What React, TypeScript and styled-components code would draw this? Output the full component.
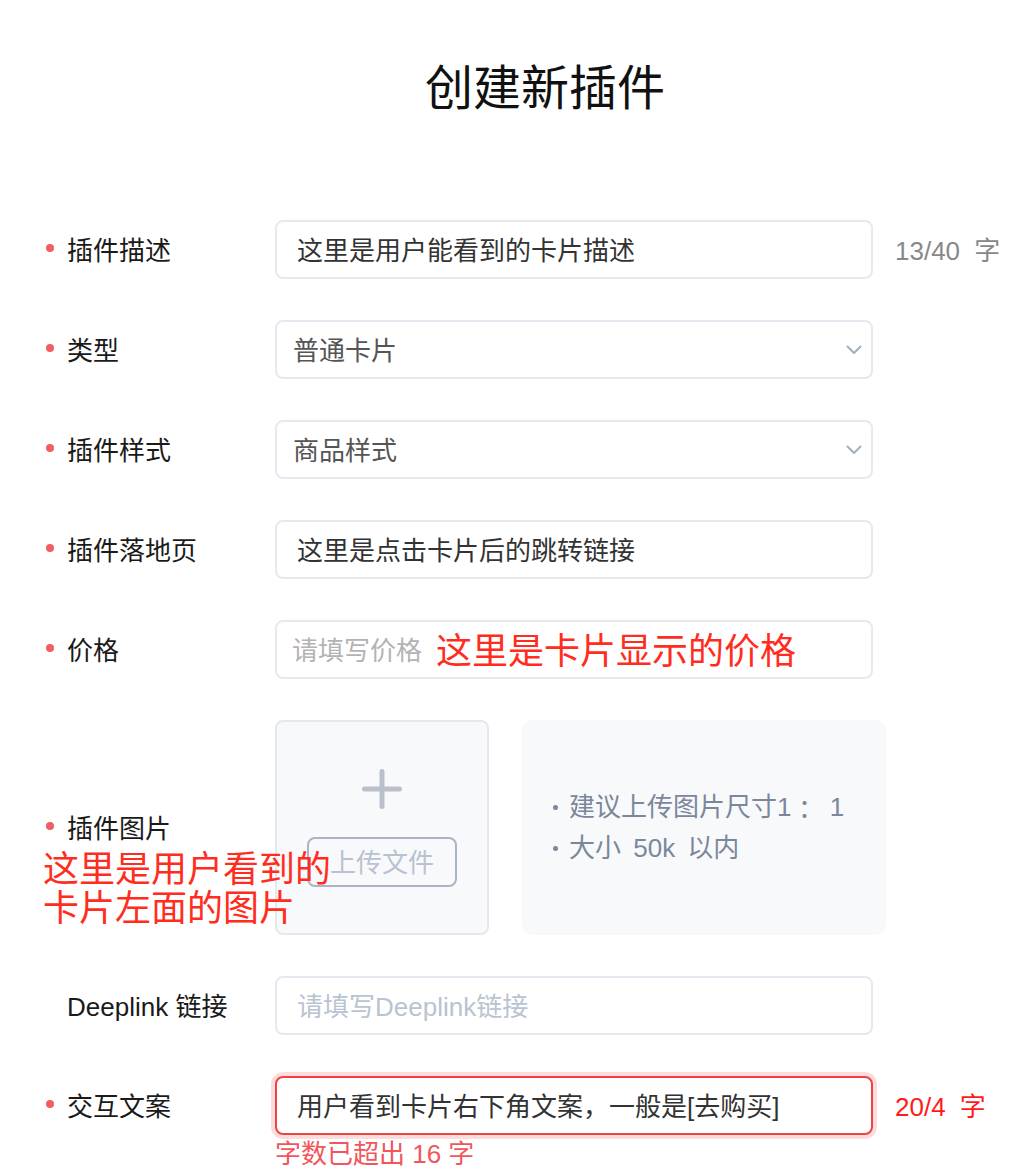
import React from "react";
import styled, { createGlobalStyle, css } from "styled-components";

const Global = createGlobalStyle`
  html, body { margin: 0; padding: 0; background: #ffffff; }
  body {
    font-family: "Liberation Sans", "Noto Sans CJK SC", sans-serif;
    color: #1a1a1a;
  }
  * { box-sizing: border-box; }
`;

const Page = styled.div`
  width: 1022px;
  padding-top: 65px;
`;

const Title = styled.h1`
  margin: 0;
  padding-left: 68px;
  text-align: center;
  font-size: 48px;
  line-height: 48px;
  font-weight: 400;
  color: #111111;
`;

const Form = styled.div`
  margin-top: 107px;
  display: flex;
  flex-direction: column;
  gap: 41px;
`;

const Row = styled.div<{ $top?: boolean }>`
  position: relative;
  display: flex;
  align-items: ${(p) => (p.$top ? "flex-start" : "center")};
  padding-left: 46px;
`;

const Label = styled.div<{ $required?: boolean }>`
  width: 229px;
  height: 59px;
  flex: none;
  display: flex;
  align-items: center;
  padding-bottom: 3px;
  font-size: 26px;
  color: #1a1a1a;
  ${(p) =>
    p.$required
      ? css`
          &::before {
            content: "";
            width: 8px;
            height: 8px;
            border-radius: 50%;
            background: #f25c63;
            margin-right: 13px;
            flex: none;
          }
        `
      : css`
          padding-left: 21px;
        `}
`;

const FieldColumn = styled.div`
  display: flex;
  flex-direction: column;
`;

const Field = styled.div<{ $pad?: number; $error?: boolean }>`
  width: 598px;
  height: 59px;
  flex: none;
  display: flex;
  align-items: center;
  padding-left: ${(p) => p.$pad ?? 20}px;
  padding-right: 9px;
  padding-bottom: 3px;
  border: 2px solid #e6e9ef;
  border-radius: 8px;
  background: #ffffff;
  font-size: 26px;
  color: #333333;
  white-space: nowrap;
  ${(p) =>
    p.$error &&
    css`
      border-color: #ee4343;
      box-shadow: 0 0 0 4px #fcdcdc;
    `}
`;

const SelectValue = styled.span`
  color: #555555;
`;

const Placeholder = styled.span<{ $tone?: "gray" | "slate" }>`
  color: ${(p) => (p.$tone === "slate" ? "#b9c3d1" : "#b3b3b3")};
`;

const Chevron = styled.svg`
  margin-left: auto;
  margin-top: 3px;
  flex: none;
`;

const Counter = styled.div<{ $error?: boolean }>`
  margin-left: 22px;
  height: 59px;
  display: flex;
  align-items: center;
  padding-bottom: 3px;
  font-size: 26px;
  word-spacing: 7px;
  color: ${(p) => (p.$error ? "#ff1a1a" : "#888888")};
  white-space: nowrap;
`;

const Annotation = styled.span`
  margin-left: 14px;
  font-size: 36px;
  color: #ff2d20;
`;

const OverlayNote = styled.div`
  position: absolute;
  left: 43px;
  top: 130px;
  font-size: 36px;
  line-height: 39px;
  color: #ff2d20;
  pointer-events: none;
  white-space: nowrap;
`;

const UploadBox = styled.div`
  width: 214px;
  height: 215px;
  flex: none;
  display: flex;
  flex-direction: column;
  align-items: center;
  justify-content: center;
  gap: 28px;
  background: #f8f9fb;
  border: 2px solid #e5e8ee;
  border-radius: 8px;
`;

const UploadButton = styled.div`
  width: 150px;
  height: 50px;
  display: flex;
  align-items: center;
  justify-content: center;
  padding-bottom: 2px;
  border: 2px solid #a9b5c5;
  border-radius: 8px;
  font-size: 26px;
  color: #b8c2d0;
`;

const HintBox = styled.div`
  margin-left: 33px;
  width: 364px;
  height: 215px;
  flex: none;
  display: flex;
  flex-direction: column;
  justify-content: center;
  padding-left: 31px;
  background: #f8f9fb;
  border-radius: 10px;
  font-size: 26px;
  line-height: 41px;
  word-spacing: 5px;
  color: #7b879b;
`;

const HintLine = styled.div`
  display: flex;
  align-items: center;
  white-space: pre;
  &::before {
    content: "";
    width: 5px;
    height: 5px;
    border-radius: 50%;
    background: #7b879b;
    margin-right: 11px;
    flex: none;
  }
`;

const WideColon = styled.span`
  font-family: "Noto Sans CJK JP", "Noto Sans CJK SC", sans-serif;
`;

const ErrorText = styled.div`
  margin-top: 4px;
  font-size: 26px;
  line-height: 30px;
  color: #f2555b;
  white-space: nowrap;
`;

const ChevronIcon = () => (
  <Chevron width="16" height="10" viewBox="0 0 16 10">
    <path
      d="M1.5 1.5 L8 8 L14.5 1.5"
      fill="none"
      stroke="#a3aec2"
      strokeWidth="2"
      strokeLinecap="round"
      strokeLinejoin="round"
    />
  </Chevron>
);

const PlusIcon = () => (
  <svg width="40" height="40" viewBox="0 0 40 40">
    <path
      d="M20 2.5 V37.5 M2.5 20 H37.5"
      fill="none"
      stroke="#b9c0cc"
      strokeWidth="5"
      strokeLinecap="round"
    />
  </svg>
);

export default function App() {
  return (
    <>
      <Global />
      <Page>
        <Title>创建新插件</Title>
        <Form>
          <Row>
            <Label $required>插件描述</Label>
            <Field>这里是用户能看到的卡片描述</Field>
            <Counter>13/40 字</Counter>
          </Row>
          <Row>
            <Label $required>类型</Label>
            <Field $pad={16}>
              <SelectValue>普通卡片</SelectValue>
              <ChevronIcon />
            </Field>
          </Row>
          <Row>
            <Label $required>插件样式</Label>
            <Field $pad={16}>
              <SelectValue>商品样式</SelectValue>
              <ChevronIcon />
            </Field>
          </Row>
          <Row>
            <Label $required>插件落地页</Label>
            <Field>这里是点击卡片后的跳转链接</Field>
          </Row>
          <Row>
            <Label $required>价格</Label>
            <Field $pad={15}>
              <Placeholder>请填写价格</Placeholder>
              <Annotation>这里是卡片显示的价格</Annotation>
            </Field>
          </Row>
          <Row>
            <Label $required>插件图片</Label>
            <UploadBox>
              <PlusIcon />
              <UploadButton>上传文件</UploadButton>
            </UploadBox>
            <HintBox>
              <HintLine>
                建议上传图片尺寸1<WideColon>：</WideColon> 1
              </HintLine>
              <HintLine>大小 50k 以内</HintLine>
            </HintBox>
            <OverlayNote>
              这里是用户看到的
              <br />
              卡片左面的图片
            </OverlayNote>
          </Row>
          <Row>
            <Label>Deeplink 链接</Label>
            <Field>
              <Placeholder $tone="slate">请填写Deeplink链接</Placeholder>
            </Field>
          </Row>
          <Row $top>
            <Label $required>交互文案</Label>
            <FieldColumn>
              <Field $error>用户看到卡片右下角文案，一般是[去购买]</Field>
              <ErrorText>字数已超出 16 字</ErrorText>
            </FieldColumn>
            <Counter $error>20/4 字</Counter>
          </Row>
        </Form>
      </Page>
    </>
  );
}
